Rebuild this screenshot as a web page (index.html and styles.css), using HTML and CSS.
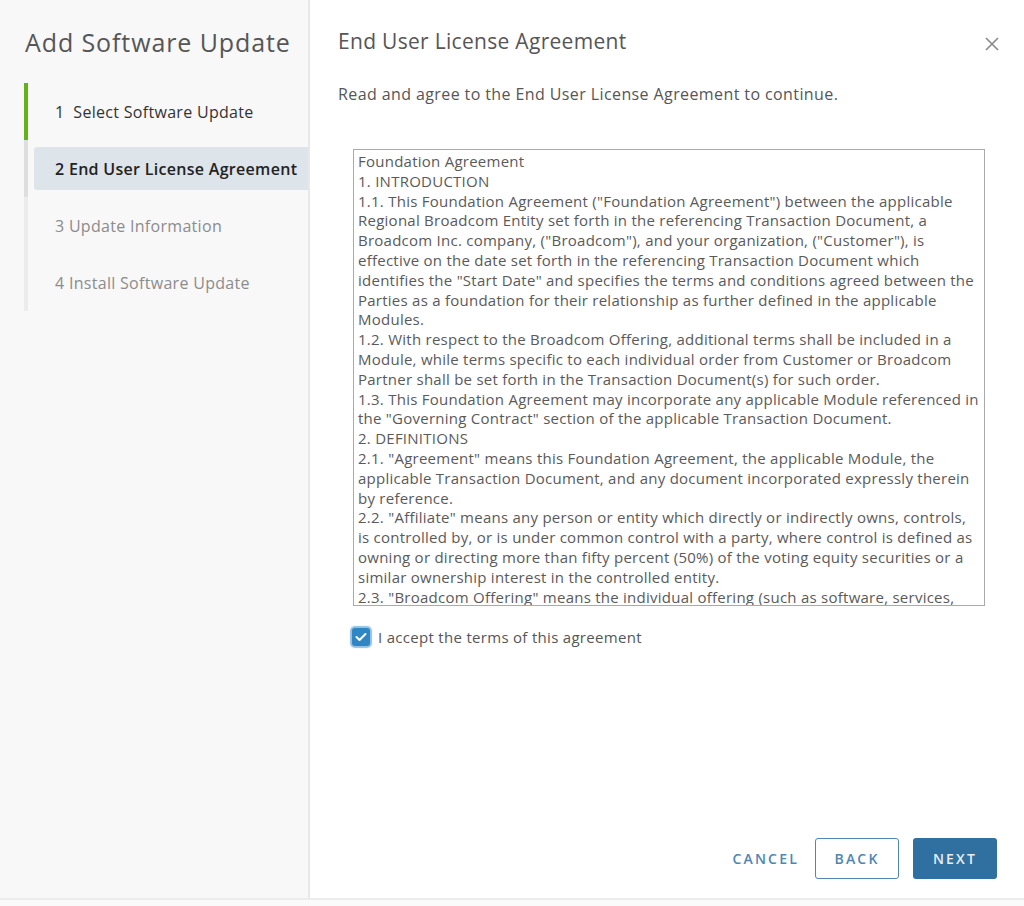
FILE: index.html
```html
<!DOCTYPE html>
<html lang="en">
<head>
<meta charset="utf-8">
<title>Add Software Update</title>
<link rel="stylesheet" href="styles.css">
</head>
<body>
<div class="modal">
  <aside class="sidebar">
    <h1 class="wizard-title">Add Software Update</h1>
    <ol class="steps">
      <li class="step done"><span class="step-label">1&nbsp; Select Software Update</span></li>
      <li class="step current"><span class="step-label">2 End User License Agreement</span></li>
      <li class="step todo"><span class="step-label">3 Update Information</span></li>
      <li class="step todo"><span class="step-label">4 Install Software Update</span></li>
    </ol>
  </aside>
  <main class="content">
    <header class="content-header">
      <h2 class="page-title">End User License Agreement</h2>
      <button class="close" aria-label="Close">
        <svg width="14" height="14" viewBox="0 0 14 14"><path d="M1 1 L13 13 M13 1 L1 13" stroke="#8a8a8a" stroke-width="1.6" fill="none"/></svg>
      </button>
    </header>
    <p class="intro">Read and agree to the End User License Agreement to continue.</p>
    <div class="eula">
      Foundation Agreement<br>
      1. INTRODUCTION<br>
      1.1. This Foundation Agreement ("Foundation Agreement") between the applicable<br>
      Regional Broadcom Entity set forth in the referencing Transaction Document, a<br>
      Broadcom Inc. company, ("Broadcom"), and your organization, ("Customer"), is<br>
      effective on the date set forth in the referencing Transaction Document which<br>
      identifies the "Start Date" and specifies the terms and conditions agreed between the<br>
      Parties as a foundation for their relationship as further defined in the applicable<br>
      Modules.<br>
      1.2. With respect to the Broadcom Offering, additional terms shall be included in a<br>
      Module, while terms specific to each individual order from Customer or Broadcom<br>
      Partner shall be set forth in the Transaction Document(s) for such order.<br>
      1.3. This Foundation Agreement may incorporate any applicable Module referenced in<br>
      the "Governing Contract" section of the applicable Transaction Document.<br>
      2. DEFINITIONS<br>
      2.1. "Agreement" means this Foundation Agreement, the applicable Module, the<br>
      applicable Transaction Document, and any document incorporated expressly therein<br>
      by reference.<br>
      2.2. "Affiliate" means any person or entity which directly or indirectly owns, controls,<br>
      is controlled by, or is under common control with a party, where control is defined as<br>
      owning or directing more than fifty percent (50%) of the voting equity securities or a<br>
      similar ownership interest in the controlled entity.<br>
      2.3. "Broadcom Offering" means the individual offering (such as software, services,<br>
      etc.) that is made available by Broadcom to Customer under a Module.<br>
      2.4. "Confidential Information" means any information disclosed by one party
    </div>
    <label class="accept">
      <span class="checkbox">
        <svg width="12" height="10" viewBox="0 0 12 10"><path d="M1.5 5 L4.5 8 L10.5 2" stroke="#fff" stroke-width="2" fill="none" stroke-linecap="round" stroke-linejoin="round"/></svg>
      </span>
      <span class="accept-text">I accept the terms of this agreement</span>
    </label>
    <footer class="actions">
      <button class="btn btn-link">CANCEL</button>
      <button class="btn btn-outline">BACK</button>
      <button class="btn btn-primary">NEXT</button>
    </footer>
  </main>
</div>
</body>
</html>
```
FILE: styles.css
```css
* { box-sizing: border-box; }
html, body { margin: 0; padding: 0; }
body {
  width: 1024px;
  height: 906px;
  background: #fafafa;
  font-family: "Open Sans", "Noto Sans", sans-serif;
  color: #565656;
}
.modal {
  display: flex;
  height: 900px;
  background: #fff;
  border-bottom: 2px solid #ececec;
}
.sidebar {
  width: 310px;
  flex: none;
  background: #f8f8f8;
  border-right: 2px solid #e8e8e8;
}
.wizard-title {
  margin: 0;
  padding: 27px 0 0 25px;
  font-size: 25px;
  line-height: 30px;
  font-weight: 400;
  color: #565656;
  letter-spacing: 0.9px;
}
.steps {
  list-style: none;
  margin: 26px 0 0 24px;
  padding: 0;
}
.step {
  height: 57px;
  border-left: 4px solid #ececec;
  display: flex;
  align-items: center;
  padding-left: 6px;
}
.step.done { border-left-color: #62b31a; }
.step.current { border-left-color: #dedede; }
.step-label {
  flex: 1;
  height: 43px;
  display: flex;
  align-items: center;
  padding-left: 21px;
  font-size: 16px;
  letter-spacing: 0.3px;
  color: #333;
  border-radius: 3px 0 0 3px;
  white-space: nowrap;
}
.step.current .step-label {
  background: #dde4ea;
  font-weight: 600;
  color: #222;
}
.step.todo .step-label { color: #8c8c8c; }

.content {
  flex: 1;
  display: flex;
  flex-direction: column;
  padding: 0 27px 19px 28px;
}
.content-header {
  display: flex;
  align-items: center;
  justify-content: space-between;
  height: 84px;
}
.page-title {
  margin: 0;
  font-size: 21px;
  letter-spacing: 0.3px;
  font-weight: 400;
  color: #565656;
  align-self: flex-start;
  padding-top: 27px;
  line-height: 28px;
}
.close {
  border: 0;
  background: none;
  padding: 0;
  margin: 4px -2px 0 0;
  width: 14px;
  height: 14px;
  line-height: 0;
}
.intro {
  margin: 0;
  font-size: 16px;
  letter-spacing: 0.4px;
  line-height: 20px;
  color: #565656;
}
.eula {
  margin: 45px 0 0 15px;
  width: 632px;
  height: 457px;
  border: 1px solid #aaa;
  padding: 2px 4px;
  overflow-y: auto;
  overflow-x: hidden;
  scrollbar-width: none;
  font-size: 15px;
  letter-spacing: 0.25px;
  line-height: 19.8px;
  color: #5a5a5a;
  white-space: nowrap;
}
.accept {
  display: flex;
  align-items: center;
  margin: 21px 0 0 14px;
}
.checkbox {
  width: 18px;
  height: 18px;
  border-radius: 3px;
  background: #2f86c5;
  box-shadow: 0 0 1px 2px rgba(61, 140, 204, 0.55);
  display: flex;
  align-items: center;
  justify-content: center;
}
.accept-text {
  margin-left: 8px;
  font-size: 15px;
  letter-spacing: 0.3px;
  color: #565656;
}
.actions {
  margin-top: auto;
  display: flex;
  justify-content: flex-end;
  align-items: center;
  gap: 14px;
}
.btn {
  font-family: inherit;
  font-size: 14px;
  font-weight: 600;
  letter-spacing: 2.2px;
  height: 41px;
  border-radius: 3px;
  cursor: pointer;
}
.btn-link {
  border: 0;
  background: none;
  color: #4f86b2;
  padding: 0 2px;
}
.btn-outline {
  width: 84px;
  border: 1px solid #4f86b2;
  background: #fff;
  color: #4f86b2;
}
.btn-primary {
  width: 84px;
  border: 0;
  background: #3070a0;
  color: #e7eef5;
}
```
